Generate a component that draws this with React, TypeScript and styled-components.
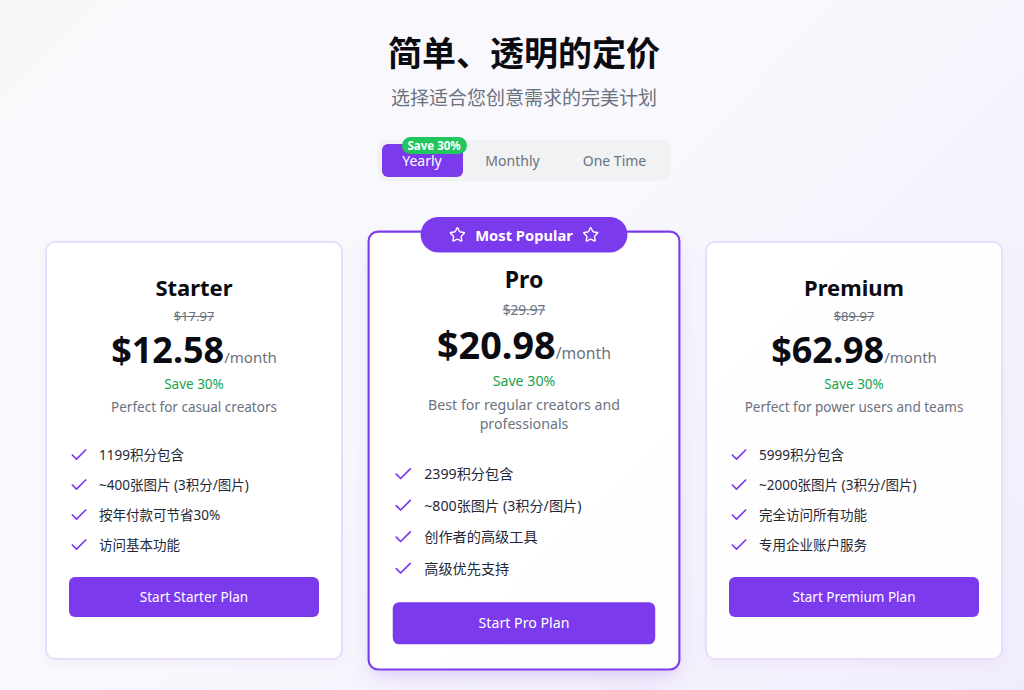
import React from "react";
import styled, { createGlobalStyle } from "styled-components";
import { Check, Star } from "lucide-react";

const GlobalStyle = createGlobalStyle`
  html, body { margin: 0; padding: 0; }
  body {
    font-family: "Noto Sans", "Noto Sans CJK SC", sans-serif;
    background: linear-gradient(135deg, #f8f8fb 0%, #f9f8fd 45%, #f1ecfc 100%);
    min-height: 690px;
    color: #111827;
  }
  * { box-sizing: border-box; }
`;

const Page = styled.main`
  padding: 30px 0 0 24px;
  display: flex;
  flex-direction: column;
  align-items: center;
`;

const Title = styled.h1`
  margin: 0;
  font-size: 34px;
  line-height: 44px;
  font-weight: 700;
  color: #0b0b12;
  font-family: "Noto Sans CJK SC", sans-serif;
`;

const Subtitle = styled.p`
  margin: 9px 0 0;
  font-size: 19px;
  line-height: 28px;
  color: #6b7280;
  font-family: "Noto Sans CJK SC", sans-serif;
`;

const Toggle = styled.div`
  margin-top: 29px;
  display: flex;
  padding: 4px;
  background: #f1f2f4;
  border-radius: 9px;
`;

const ToggleButton = styled.button<{ $active?: boolean; $w: number }>`
  position: relative;
  width: ${(p) => p.$w}px;
  height: 33px;
  border: none;
  border-radius: 6px;
  font-family: "Noto Sans", sans-serif;
  font-size: 14px;
  cursor: pointer;
  background: ${(p) => (p.$active ? "#7c3aed" : "transparent")};
  color: ${(p) => (p.$active ? "#ffffff" : "#6b7280")};
  padding: 0;
`;

const SaveBadge = styled.span`
  position: absolute;
  top: -7px;
  left: 20px;
  background: #22c55e;
  color: #fff;
  font-size: 11.5px;
  font-weight: 700;
  line-height: 17px;
  padding: 0 6px;
  border-radius: 999px;
  white-space: nowrap;
`;

const Grid = styled.div`
  margin-top: 60px;
  display: grid;
  grid-template-columns: repeat(3, 298px);
  gap: 32px;
`;

const Card = styled.div<{ $popular?: boolean }>`
  position: relative;
  background: rgba(255, 255, 255, 0.92);
  border: 2px solid ${(p) => (p.$popular ? "#7c3aed" : "#e9ddfd")};
  border-radius: 10px;
  padding: 28px 22px 23px;
  display: flex;
  flex-direction: column;
  align-items: stretch;
  transform: ${(p) => (p.$popular ? "scale(1.05)" : "none")};
  box-shadow: ${(p) =>
    p.$popular
      ? "0 10px 25px -5px rgba(124, 58, 237, 0.15), 0 8px 10px -6px rgba(124, 58, 237, 0.1)"
      : "0 4px 12px rgba(124, 58, 237, 0.04)"};
`;

const PopularBadge = styled.div`
  position: absolute;
  top: -15px;
  left: 50%;
  transform: translateX(-50%);
  height: 34px;
  padding: 0 27px;
  border-radius: 999px;
  background: #7c3aed;
  color: #fff;
  display: flex;
  align-items: center;
  gap: 9px;
  font-size: 14px;
  font-weight: 700;
  white-space: nowrap;
`;

const Header = styled.div`
  display: flex;
  flex-direction: column;
  align-items: center;
  text-align: center;
`;

const PlanName = styled.h3`
  margin: 0;
  font-size: 22px;
  line-height: 32px;
  font-weight: 700;
  color: #0b0b12;
`;

const OldPrice = styled.div`
  margin-top: 3px;
  font-size: 13px;
  line-height: 20px;
  color: #6b7280;
  text-decoration: line-through;
`;

const PriceRow = styled.div`
  margin-top: 10px;
  display: flex;
  align-items: baseline;
  line-height: 28px;
`;

const Price = styled.span`
  font-size: 36px;
  font-weight: 700;
  color: #0b0b12;
`;

const Per = styled.span`
  font-size: 15px;
  color: #6b7280;
`;

const SaveText = styled.div`
  margin-top: 3px;
  font-size: 13.5px;
  line-height: 20px;
  color: #16a34a;
`;

const Desc = styled.p`
  margin: 4px 0 0;
  font-size: 13.5px;
  line-height: 18px;
  color: #6b7280;
  padding: 0 4px;
`;

const Features = styled.ul`
  list-style: none;
  margin: 29px 0 0;
  padding: 0;
  display: flex;
  flex-direction: column;
  gap: 10px;
`;

const Feature = styled.li`
  display: flex;
  align-items: center;
  gap: 10px;
  font-size: 13.5px;
  line-height: 20px;
  color: #1f2937;
  font-family: "Noto Sans", "Noto Sans CJK SC", sans-serif;
`;

const CTA = styled.button`
  margin-top: 22px;
  height: 40px;
  border: none;
  border-radius: 6px;
  background: #7c3aed;
  color: #fff;
  font-family: "Noto Sans", sans-serif;
  font-size: 13.5px;
  cursor: pointer;
`;

type Plan = {
  name: string;
  old: string;
  price: string;
  desc: string;
  features: string[];
  cta: string;
  popular?: boolean;
};

const plans: Plan[] = [
  {
    name: "Starter",
    old: "$17.97",
    price: "$12.58",
    desc: "Perfect for casual creators",
    features: ["1199积分包含", "~400张图片 (3积分/图片)", "按年付款可节省30%", "访问基本功能"],
    cta: "Start Starter Plan",
  },
  {
    name: "Pro",
    old: "$29.97",
    price: "$20.98",
    desc: "Best for regular creators and professionals",
    features: ["2399积分包含", "~800张图片 (3积分/图片)", "创作者的高级工具", "高级优先支持"],
    cta: "Start Pro Plan",
    popular: true,
  },
  {
    name: "Premium",
    old: "$89.97",
    price: "$62.98",
    desc: "Perfect for power users and teams",
    features: ["5999积分包含", "~2000张图片 (3积分/图片)", "完全访问所有功能", "专用企业账户服务"],
    cta: "Start Premium Plan",
  },
];

export default function App() {
  return (
    <>
      <GlobalStyle />
      <Page>
        <Title>简单、透明的定价</Title>
        <Subtitle>选择适合您创意需求的完美计划</Subtitle>
        <Toggle>
          <ToggleButton $active $w={81}>
            Yearly
            <SaveBadge>Save 30%</SaveBadge>
          </ToggleButton>
          <ToggleButton $w={100}>Monthly</ToggleButton>
          <ToggleButton $w={104}>One Time</ToggleButton>
        </Toggle>
        <Grid>
          {plans.map((p) => (
            <Card key={p.name} $popular={p.popular}>
              {p.popular && (
                <PopularBadge>
                  <Star size={16} strokeWidth={2} />
                  Most Popular
                  <Star size={16} strokeWidth={2} />
                </PopularBadge>
              )}
              <Header>
                <PlanName>{p.name}</PlanName>
                <OldPrice>{p.old}</OldPrice>
                <PriceRow>
                  <Price>{p.price}</Price>
                  <Per>/month</Per>
                </PriceRow>
                <SaveText>Save 30%</SaveText>
                <Desc>{p.desc}</Desc>
              </Header>
              <Features>
                {p.features.map((f) => (
                  <Feature key={f}>
                    <Check size={20} color="#7c3aed" strokeWidth={2} />
                    {f}
                  </Feature>
                ))}
              </Features>
              <CTA>{p.cta}</CTA>
            </Card>
          ))}
        </Grid>
      </Page>
    </>
  );
}
